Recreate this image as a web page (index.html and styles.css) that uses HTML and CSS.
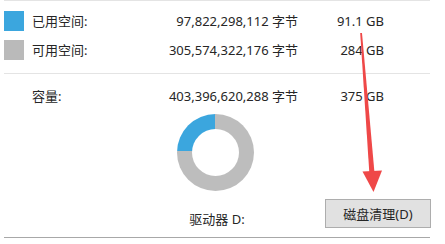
FILE: index.html
```html
<!DOCTYPE html>
<html lang="zh-CN">
<head>
    <meta charset="UTF-8">
    <title>本地磁盘 (D:) 属性</title>
    <link rel="stylesheet" href="styles.css">
</head>
<body>
    <div class="props">
        <div class="usage">
            <span class="swatch used"></span>
            <span class="label">已用空间:</span>
            <span class="bytes">97,822,298,112 字节</span>
            <span class="size">91.1 GB</span>

            <span class="swatch free"></span>
            <span class="label">可用空间:</span>
            <span class="bytes">305,574,322,176 字节</span>
            <span class="size">284 GB</span>
        </div>

        <div class="usage capacity">
            <span></span>
            <span class="label">容量:</span>
            <span class="bytes">403,396,620,288 字节</span>
            <span class="size">375 GB</span>
        </div>

        <div class="donut"></div>

        <div class="drive-row">
            <span></span>
            <span class="drive">驱动器 D:</span>
            <button class="btn">磁盘清理(D)</button>
        </div>
    </div>

    <!-- red annotation arrow pointing at the button -->
    <svg class="arrow" width="445" height="244" viewBox="0 0 445 244">
        <polygon points="360.2,33 362,33 374.6,174 369.4,174" fill="#ef4848"/>
        <polygon points="362.5,171.5 382,170.5 373.5,192" fill="#ef4848"/>
    </svg>
</body>
</html>
```

FILE: styles.css
```css
body {
    margin: 0;
    background: #fff;
    font-family: "Noto Sans", "Noto Sans CJK SC", sans-serif;
    font-size: 13px;
    color: #262626;
}
.props {
    margin-left: 4px;
    width: 426px;
    border-top: 1px solid #e4e4e4;
    border-bottom: 1px solid #a8a8a8;
    height: 238px;
    box-sizing: border-box;
}
.usage {
    display: grid;
    grid-template-columns: 28px 108px 158px 86px;
    grid-auto-rows: 20px;
    row-gap: 9px;
    align-items: center;
    padding: 10px 0 13px;
    border-bottom: 1px solid #e4e4e4;
    line-height: 20px;
}
.usage.capacity {
    padding: 12px 0 0;
    border-bottom: none;
}
.swatch {
    width: 20px;
    height: 20px;
}
.swatch.used {
    background: #3ba6de;
}
.swatch.free {
    background: #bababa;
}
.bytes,
.size {
    text-align: right;
    white-space: nowrap;
}
.donut {
    position: relative;
    width: 77px;
    height: 77px;
    margin: 8px 0 0 173px;
    border-radius: 50%;
    background: conic-gradient(#bdbdbd 0 75.7%, #3ba6de 75.7% 100%);
}
.donut::after {
    content: "";
    position: absolute;
    left: 15px;
    top: 15px;
    width: 47px;
    height: 47px;
    border-radius: 50%;
    background: #fff;
}
.drive-row {
    display: grid;
    grid-template-columns: 1fr auto 1fr;
    align-items: end;
    margin-top: 8px;
}
.drive {
    line-height: 16px;
    margin-bottom: 1px;
}
.btn {
    justify-self: end;
    width: 106px;
    height: 29px;
    margin-right: -1px;
    background: #e1e1e1;
    border: 1px solid #adadad;
    font-family: inherit;
    font-size: 13px;
    color: #262626;
    padding: 0;
}
.arrow {
    position: absolute;
    left: 0;
    top: 0;
    pointer-events: none;
}
```
